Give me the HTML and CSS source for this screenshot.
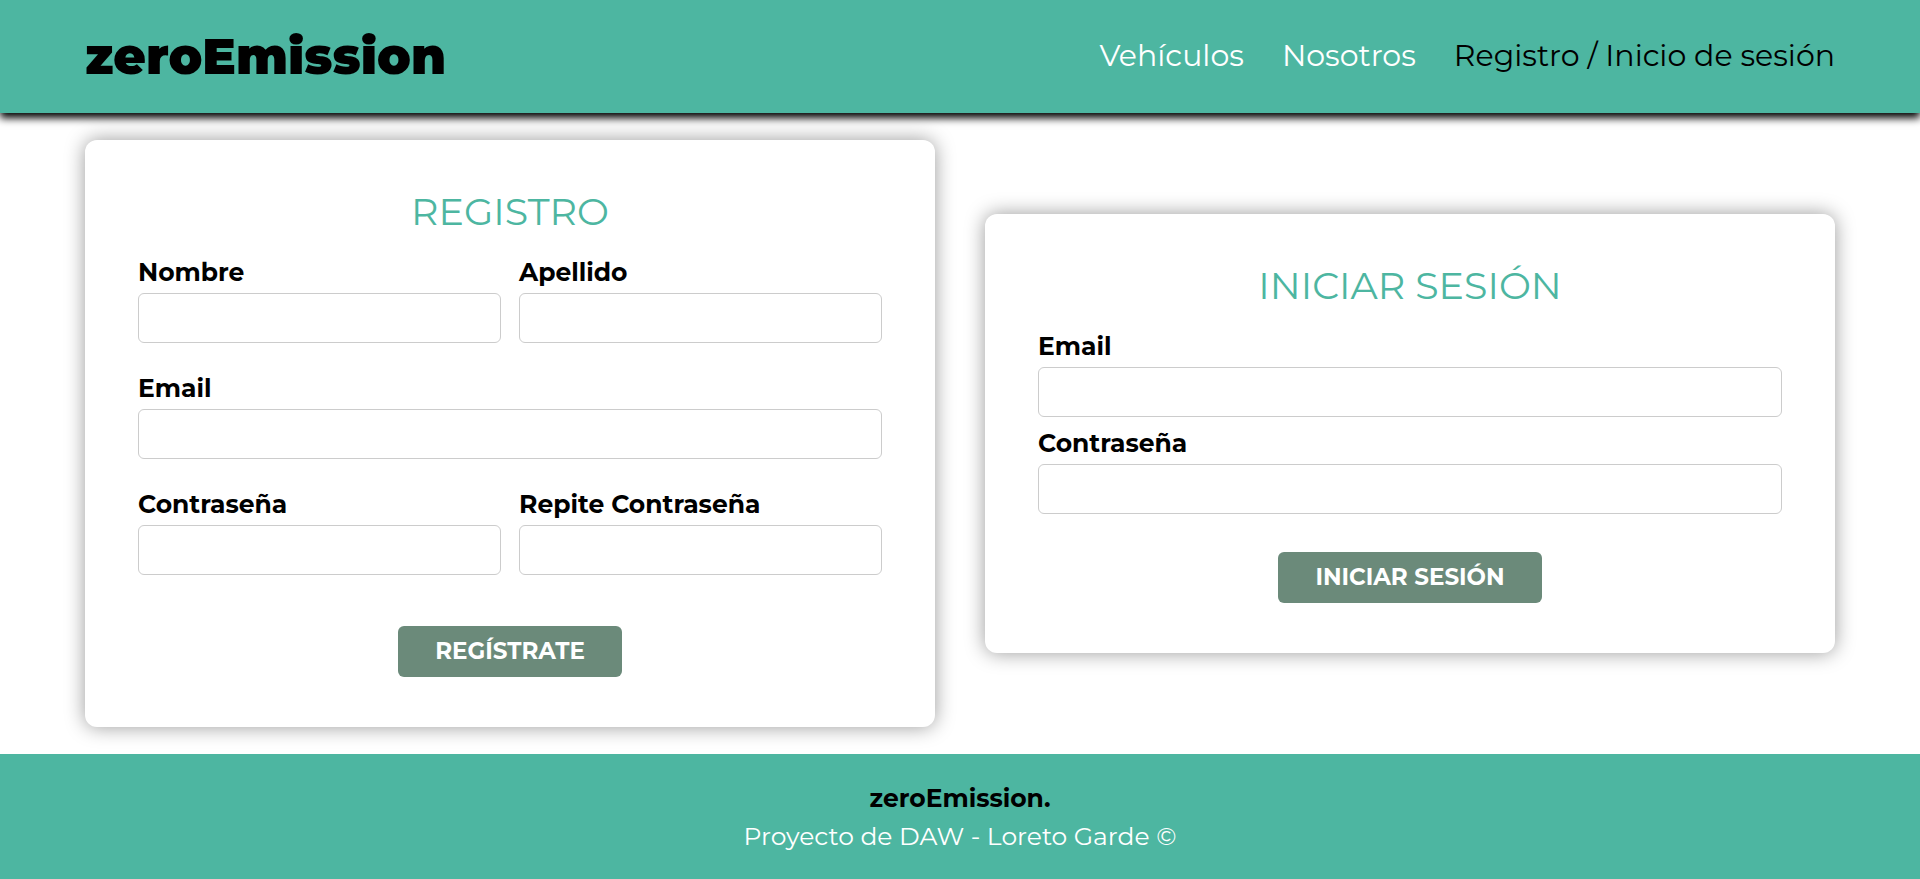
FILE: index.html
```html
<!DOCTYPE html>
<html lang="es">
<head>
<meta charset="utf-8">
<meta name="viewport" content="width=device-width, initial-scale=1">
<title>zeroEmission</title>
<link rel="stylesheet" href="styles.css">
</head>
<body>
<header class="header">
  <a class="logo" href="#">zeroEmission</a>
  <nav class="nav">
    <a class="nav-link" href="#">Vehículos</a>
    <a class="nav-link" href="#">Nosotros</a>
    <a class="nav-link nav-link-active" href="#">Registro / Inicio de sesión</a>
  </nav>
</header>
<main class="main">
  <form class="card">
    <h2 class="card-title">REGISTRO</h2>
    <div class="fields fields-register">
      <div class="field">
        <label class="label" for="nombre">Nombre</label>
        <input class="input" id="nombre" type="text">
      </div>
      <div class="field">
        <label class="label" for="apellido">Apellido</label>
        <input class="input" id="apellido" type="text">
      </div>
      <div class="field field-wide">
        <label class="label" for="email">Email</label>
        <input class="input" id="email" type="email">
      </div>
      <div class="field">
        <label class="label" for="clave">Contraseña</label>
        <input class="input" id="clave" type="password">
      </div>
      <div class="field">
        <label class="label" for="clave2">Repite Contraseña</label>
        <input class="input" id="clave2" type="password">
      </div>
    </div>
    <button class="button button-register" type="submit">REGÍSTRATE</button>
  </form>
  <form class="card">
    <h2 class="card-title">INICIAR SESIÓN</h2>
    <div class="fields fields-login">
      <div class="field">
        <label class="label" for="login-email">Email</label>
        <input class="input" id="login-email" type="email">
      </div>
      <div class="field">
        <label class="label" for="login-clave">Contraseña</label>
        <input class="input" id="login-clave" type="password">
      </div>
    </div>
    <button class="button button-login" type="submit">INICIAR SESIÓN</button>
  </form>
</main>
<footer class="footer">
  <p class="footer-brand">zeroEmission.</p>
  <p class="footer-text">Proyecto de DAW - Loreto Garde ©</p>
</footer>
</body>
</html>
```
FILE: styles.css
```css
* {
  box-sizing: border-box;
}

body {
  margin: 0;
  min-height: 100vh;
  display: flex;
  flex-direction: column;
  background: #fff;
  color: #000;
  font-family: Montserrat, Inter, "Open Sans", sans-serif;
  font-size: 25px;
}

.header {
  display: flex;
  align-items: center;
  justify-content: space-between;
  padding: 25px 85px 24px;
  background: #4db6a1;
  box-shadow: 0 5px 8px #000;
}

.logo {
  color: #000;
  font-size: 50px;
  font-weight: 900;
  line-height: 64px;
  text-decoration: none;
}

.nav {
  display: flex;
  gap: 38px;
}

.nav-link {
  padding-bottom: 2px;
  color: #fff;
  font-size: 30px;
  line-height: 38px;
  text-decoration: none;
}

.nav-link-active {
  color: #000;
}

.main {
  flex: 1;
  display: grid;
  grid-template-columns: 1fr 1fr;
  gap: 50px;
  align-items: center;
  padding: 27px 85px;
}

.card {
  display: flex;
  flex-direction: column;
  padding: 50px 53px;
  border-radius: 12px;
  background: #fff;
  box-shadow: 0 0 20px rgba(0, 0, 0, 0.4);
}

.card-title {
  margin: 0 0 18px;
  color: #4db6a1;
  font-size: 38px;
  font-weight: 400;
  line-height: 44px;
  text-align: center;
}

.fields {
  display: grid;
}

.fields-register {
  grid-template-columns: 1fr 1fr;
  gap: 25px 18px;
}

.fields-login {
  gap: 6px;
}

.field {
  display: flex;
  flex-direction: column;
}

.field-wide {
  grid-column: 1 / -1;
}

.label {
  padding-bottom: 1px;
  font-weight: 700;
  line-height: 40px;
}

.input {
  width: 100%;
  height: 50px;
  padding: 8px 12px;
  border: 1px solid #ccc;
  border-radius: 6px;
  background: #fff;
  font: inherit;
}

.button {
  align-self: center;
  height: 51px;
  padding: 0 37px 2px;
  border: 0;
  border-radius: 6px;
  background: #6b8a7a;
  color: #fff;
  font-family: inherit;
  font-size: 23px;
  font-weight: 700;
  line-height: 30px;
}

.button-register {
  margin-top: 51px;
}

.button-login {
  margin-top: 38px;
}

.footer {
  padding: 25px 0 24px;
  background: #4db6a1;
  text-align: center;
}

.footer-brand,
.footer-text {
  margin: 0;
  line-height: 38px;
}

.footer-brand {
  font-weight: 700;
}

.footer-text {
  color: #fff;
}
```
